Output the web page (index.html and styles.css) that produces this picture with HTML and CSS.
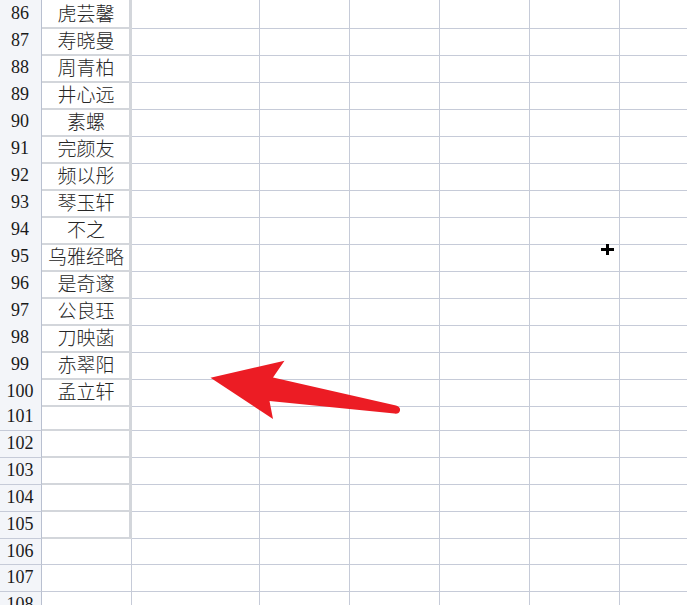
FILE: index.html
```html
<!DOCTYPE html>
<html lang="zh">
<head>
<meta charset="utf-8">
<title>Sheet</title>
<link rel="stylesheet" href="styles.css">
</head>
<body>
<div class="sheet">
  <div class="row"><div class="hd">86</div><div class="ca b">虎芸馨</div><div class="c"></div><div class="c"></div><div class="c"></div><div class="c"></div><div class="c"></div><div class="c"></div></div>
  <div class="row"><div class="hd">87</div><div class="ca b">寿晓曼</div><div class="c"></div><div class="c"></div><div class="c"></div><div class="c"></div><div class="c"></div><div class="c"></div></div>
  <div class="row"><div class="hd">88</div><div class="ca b">周青柏</div><div class="c"></div><div class="c"></div><div class="c"></div><div class="c"></div><div class="c"></div><div class="c"></div></div>
  <div class="row"><div class="hd">89</div><div class="ca b">井心远</div><div class="c"></div><div class="c"></div><div class="c"></div><div class="c"></div><div class="c"></div><div class="c"></div></div>
  <div class="row"><div class="hd">90</div><div class="ca b">素螺</div><div class="c"></div><div class="c"></div><div class="c"></div><div class="c"></div><div class="c"></div><div class="c"></div></div>
  <div class="row"><div class="hd">91</div><div class="ca b">完颜友</div><div class="c"></div><div class="c"></div><div class="c"></div><div class="c"></div><div class="c"></div><div class="c"></div></div>
  <div class="row"><div class="hd">92</div><div class="ca b">频以彤</div><div class="c"></div><div class="c"></div><div class="c"></div><div class="c"></div><div class="c"></div><div class="c"></div></div>
  <div class="row"><div class="hd">93</div><div class="ca b">琴玉轩</div><div class="c"></div><div class="c"></div><div class="c"></div><div class="c"></div><div class="c"></div><div class="c"></div></div>
  <div class="row"><div class="hd">94</div><div class="ca b">不之</div><div class="c"></div><div class="c"></div><div class="c"></div><div class="c"></div><div class="c"></div><div class="c"></div></div>
  <div class="row"><div class="hd">95</div><div class="ca b">乌雅经略</div><div class="c"></div><div class="c"></div><div class="c"></div><div class="c"></div><div class="c"></div><div class="c"></div></div>
  <div class="row"><div class="hd">96</div><div class="ca b">是奇邃</div><div class="c"></div><div class="c"></div><div class="c"></div><div class="c"></div><div class="c"></div><div class="c"></div></div>
  <div class="row"><div class="hd">97</div><div class="ca b">公良珏</div><div class="c"></div><div class="c"></div><div class="c"></div><div class="c"></div><div class="c"></div><div class="c"></div></div>
  <div class="row"><div class="hd">98</div><div class="ca b">刀映菡</div><div class="c"></div><div class="c"></div><div class="c"></div><div class="c"></div><div class="c"></div><div class="c"></div></div>
  <div class="row"><div class="hd">99</div><div class="ca b">赤翠阳</div><div class="c"></div><div class="c"></div><div class="c"></div><div class="c"></div><div class="c"></div><div class="c"></div></div>
  <div class="row"><div class="hd">100</div><div class="ca b">孟立轩</div><div class="c"></div><div class="c"></div><div class="c"></div><div class="c"></div><div class="c"></div><div class="c"></div></div>
  <div class="row"><div class="hd">101</div><div class="ca b"></div><div class="c"></div><div class="c"></div><div class="c"></div><div class="c"></div><div class="c"></div><div class="c"></div></div>
  <div class="row"><div class="hd">102</div><div class="ca b"></div><div class="c"></div><div class="c"></div><div class="c"></div><div class="c"></div><div class="c"></div><div class="c"></div></div>
  <div class="row"><div class="hd">103</div><div class="ca b"></div><div class="c"></div><div class="c"></div><div class="c"></div><div class="c"></div><div class="c"></div><div class="c"></div></div>
  <div class="row"><div class="hd">104</div><div class="ca b"></div><div class="c"></div><div class="c"></div><div class="c"></div><div class="c"></div><div class="c"></div><div class="c"></div></div>
  <div class="row"><div class="hd">105</div><div class="ca b"></div><div class="c"></div><div class="c"></div><div class="c"></div><div class="c"></div><div class="c"></div><div class="c"></div></div>
  <div class="row short"><div class="hd">106</div><div class="ca"></div><div class="c"></div><div class="c"></div><div class="c"></div><div class="c"></div><div class="c"></div><div class="c"></div></div>
  <div class="row"><div class="hd">107</div><div class="ca"></div><div class="c"></div><div class="c"></div><div class="c"></div><div class="c"></div><div class="c"></div><div class="c"></div></div>
  <div class="row"><div class="hd">108</div><div class="ca"></div><div class="c"></div><div class="c"></div><div class="c"></div><div class="c"></div><div class="c"></div><div class="c"></div></div>
</div>
<svg class="overlay" width="687" height="605" viewBox="0 0 687 605">
  <path class="arrow" d="M210.5,377.8 L284.5,360.8 L273,377.5 L396,405.6 Q400.5,407 400,410.5 Q399,414.2 394.5,413.6 L269.5,401 L273,419 Z"/>
  <path class="cursor" d="M606,244 h3 v4 h5 v3 h-5 v4 h-3 v-4 h-5 v-3 h5 z"/>
</svg>
</body>
</html>
```

FILE: styles.css
```css
html, body {
  margin: 0;
  padding: 0;
  background: #ffffff;
  overflow: hidden;
  width: 687px;
  height: 605px;
}

.sheet {
  margin-top: -1px;
  width: 712px;
  display: flex;
  flex-direction: column;
}

.row {
  display: grid;
  grid-template-columns: 42px 90px 128px 90px 90px 90px 90px 92px;
  height: 27px;
}

.row.short {
  height: 26px;
}

.hd, .ca, .c {
  box-sizing: border-box;
  border-right: 1px solid #c6cbd8;
  border-bottom: 1px solid #c6cbd8;
}

.hd {
  background: #f3f5f9;
  border-right-color: #b9c0d0;
  border-bottom-color: #c6cbd8;
  font-family: "Liberation Serif", "DejaVu Serif", serif;
  font-size: 18px;
  color: #1a1a1a;
  display: flex;
  align-items: center;
  justify-content: center;
  padding-bottom: 1px;
  padding-right: 1px;
}

.ca {
  font-family: "Noto Sans CJK SC", "Noto Sans", sans-serif;
  font-weight: 300;
  font-size: 19px;
  color: #262626;
  display: flex;
  align-items: center;
  justify-content: center;
  padding-bottom: 1px;
  padding-left: 1px;
  white-space: nowrap;
}

.ca.b {
  border-right: 3px solid #d3d6db;
  border-bottom: 2px solid #d3d6db;
}

.overlay {
  position: absolute;
  left: 0;
  top: 0;
  pointer-events: none;
}

.arrow {
  fill: #ec1c24;
}

.cursor {
  fill: #000000;
}
```
